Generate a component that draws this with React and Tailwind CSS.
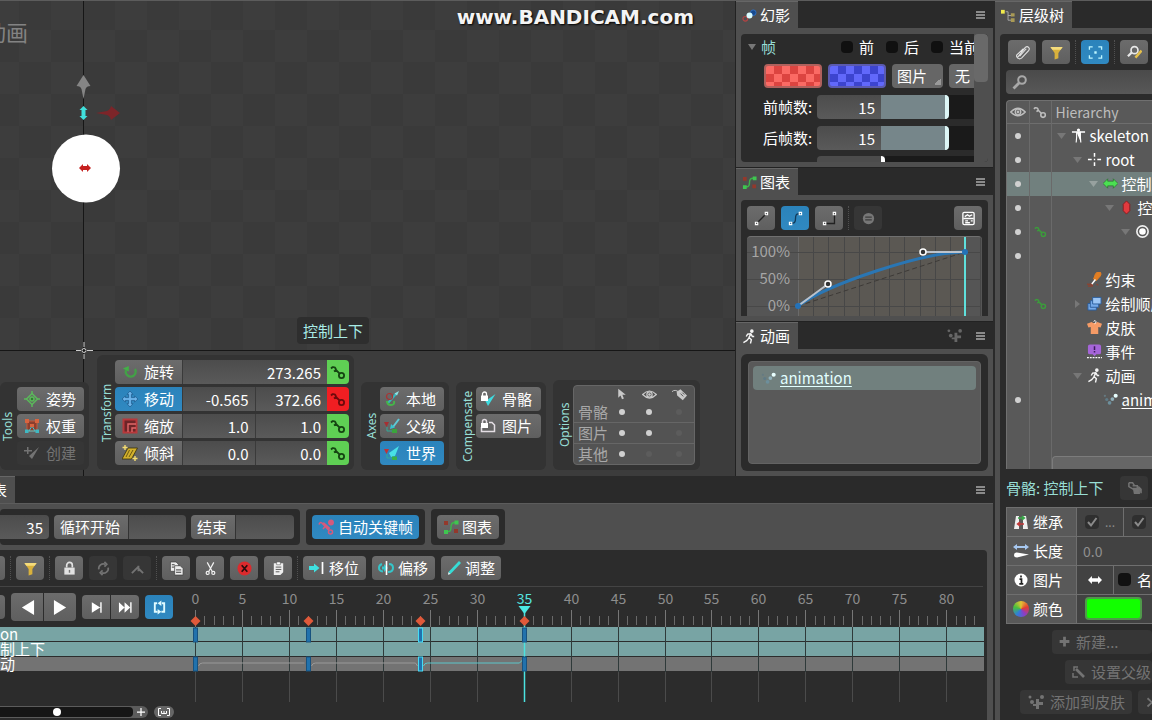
import { useState } from "react";

const BTN =
  "flex items-center rounded bg-gradient-to-b from-[#6c6c6c] to-[#5f5f5f] text-white whitespace-nowrap";
const BTN_ON =
  "flex items-center rounded bg-gradient-to-b from-[#2b83bb] to-[#3089c1] text-white whitespace-nowrap";
const BTN_OFF =
  "flex items-center rounded bg-[#363636] text-[#737373] whitespace-nowrap";
const FIELD =
  "h-6 min-w-0 bg-gradient-to-b from-[#4c4c4c] to-[#5a5a5a] text-right text-white outline-none";

// every drawing sits on a 16 x 16 grid
const ICONS = {
  key: (
    <g fill="none" stroke="currentColor" strokeWidth="1.8">
      <circle cx="11.5" cy="11.5" r="2.6" />
      <path d="M9.700 9.700 6 6Q5.500 2.500 2.500 3.200L1 4.500M6 6 4 7.500" />
    </g>
  ),
  rotate: (
    <g fill="none" stroke="#43a047" strokeWidth="2.4">
      <path d="M4 6a5 5 0 1 0 9-1" />
      <path d="M.8 4.5 6.8 2v5.6z" fill="#43b047" stroke="none" />
    </g>
  ),
  move: (
    <path
      d="M8 0l3 3.4H9.4v3.2h3.2V5L16 8l-3.4 3V9.4H9.4v3.2H11L8 16l-3-3.4h1.6V9.4H3.4V11L0 8l3.4-3v1.6h3.2V3.4H5z"
      fill="#6db4ea"
      stroke="#1a5688"
      strokeWidth=".7"
    />
  ),
  scale: (
    <g fill="none" stroke="#b8383b" strokeWidth="2">
      <path d="M1.5 1.5h13v13h-13z" fill="#6c2527" />
      <path d="M6 14V6h8M10 14v-4h4" stroke="#e0686a" strokeWidth="1.4" />
    </g>
  ),
  shear: (
    <g>
      <path d="M6 3h9.500l-6 11H0z" fill="#d2b02d" stroke="#3a3208" strokeWidth=".8" />
      <path d="M7.500 5 4 12M11 5l-4 7" stroke="#6b5912" />
      <path d="M3 0v5M.5 2.500h5M13 11v5M10.500 13.500h5" stroke="#f6dd70" strokeWidth="1.400" />
    </g>
  ),
  pose: (
    <g fill="none" stroke="#5bb85b" strokeWidth="1.500">
      <path d="M8 2.500 13.500 8 8 13.500 2.500 8z" />
      <path d="M8 0v3M8 13v3M0 8h3M13 8h3" />
      <circle cx="8" cy="8" r="2" fill="#2d7f2d" />
    </g>
  ),
  weights: (
    <g>
      <path d="M3 3h10v10H3z" fill="#8b3f2e" stroke="#c65a3c" />
      <path d="M3 13h10M5 13 8 8l3 5" stroke="#43c8d0" fill="none" />
      <path d="M1 1h4v4H1zM11 1h4v4h-4zM6 6h4v3H6z" fill="#d8643f" />
      <path d="M1 11.500h3.500V15H1zM11.500 11.500H15V15h-3.500z" fill="#3fb9c4" />
    </g>
  ),
  create: (
    <g fill="currentColor">
      <path d="M15 2 8 14 5 11z" />
      <path d="M3 2h1.500v3H8v1.500H4.500V9H3V6.500H0V5h3z" />
    </g>
  ),
  axisLocal: (
    <g fill="none">
      <path d="m4 12 8-9" stroke="#37b7bd" strokeWidth="2" />
      <circle cx="5.500" cy="5.500" r="3" stroke="#a33" strokeWidth="1.200" />
      <path d="M3 10q0 4 4 4t3-4" stroke="#46b54a" strokeWidth="2" />
      <path d="m15 0-2 4.500-2.500-2z" fill="#8ce4e6" />
    </g>
  ),
  axisParent: (
    <g>
      <path d="M15 1 9 9" stroke="#5fc9d6" strokeWidth="2" />
      <path d="m6 11 1-5 4 3.500z" fill="#39c3cf" />
      <path d="M0 4h5L2.500 9z" fill="#a62f32" />
      <path d="M3 9v4h8" stroke="#3a9" fill="none" />
      <path d="M8 11h5v4H8z" fill="#3ba43c" />
    </g>
  ),
  axisWorld: (
    <g>
      <path d="M15 1 5 8l2 4 4-1z" fill="#48e0e6" />
      <path d="M0 4h5L2.500 9z" fill="#c23236" />
      <path d="M3 9v4h6" stroke="#3a9" fill="none" />
      <path d="M8 11.500h5V15H8z" fill="#39b04a" />
    </g>
  ),
  compBone: (
    <g>
      <path d="M15.500 3 8 15 5.500 10z" fill="#3fdbe0" />
      <path d="M1 4.500h7V10H1z" fill="#fff" />
      <path d="M2.500 5V3a2 2 0 0 1 4 0v2" fill="none" stroke="#fff" strokeWidth="1.300" />
    </g>
  ),
  compImage: (
    <g fill="none" stroke="#e4dee4" strokeWidth="1.500">
      <path d="M1.500 9v4.500h13V7l-2.500-2.500H9" />
      <path d="M1 5h7v5H1z" fill="#fff" stroke="none" />
      <path d="M2.500 5V3.500a2 2 0 0 1 4 0V5" />
    </g>
  ),
  cursor: <path d="M3 1v12l3-3 2 5 2.500-1-2-5H13z" fill="currentColor" />,
  eye: (
    <g fill="none" stroke="currentColor" strokeWidth="1.300">
      <path d="M.7 8Q8 .5 15.300 8 8 15.500.7 8z" />
      <circle cx="8" cy="8" r="2.800" />
      <circle cx="8" cy="8" r=".8" fill="currentColor" />
    </g>
  ),
  tag: (
    <g>
      <path d="M5 5 9 2.500 16 9l-4.500 5L5.500 9z" fill="currentColor" />
      <path d="M0 5Q3 2 7.500 5.500" stroke="currentColor" fill="none" />
      <path d="m9 7 3 3M11 6l2 2" stroke="#4f4f4f" />
    </g>
  ),
  ghost: (
    <g>
      <circle cx="3.500" cy="11.500" r="2.500" fill="none" stroke="#b54343" strokeWidth="1.200" />
      <circle cx="12" cy="5" r="3" fill="#174a8e" stroke="#2d6ec2" />
      <circle cx="8" cy="8" r="3.200" fill="#d9fbff" />
    </g>
  ),
  graph: (
    <g>
      <path d="M1 2h4v4H1zM11 10h4v4h-4z" fill="#93392c" />
      <path d="M3 12.500h3Q8 12 8 8t3-4.500h3" fill="none" stroke="#3cb54a" strokeWidth="1.500" />
      <path d="M1 11h4v4H1zM11.500 1.500h4v4h-4z" fill="#3fc650" />
    </g>
  ),
  runner: (
    <g fill="none" stroke="#f4f4f4" strokeWidth="1.500">
      <circle cx="10.500" cy="2.300" r="1.200" fill="#fff" />
      <path d="M9.500 5 7.500 9l2.500 2.500-1 4M7.500 9.500 5 12.500l-3.500 2M9.500 5 6 5.500 4.500 8M9.500 5l1.500 3h2" />
    </g>
  ),
  dots: (
    <g>
      <circle cx="2" cy="4" r="1.200" fill="#667a82" />
      <circle cx="4" cy="8" r="1.700" fill="#5f7a86" />
      <circle cx="7" cy="11.500" r="2" fill="#6d8f9c" />
      <circle cx="10" cy="7.500" r="2" fill="#8fb0ba" />
      <circle cx="13.500" cy="4" r="2.200" fill="#e8ffff" />
    </g>
  ),
  dotsAdd: (
    <g fill="currentColor">
      <circle cx="2" cy="3" r="1.500" />
      <circle cx="4" cy="8" r="2" />
      <circle cx="14" cy="3" r="2" />
      <path d="M8 5h3v3h4v3h-4v4H8v-3H5v-2h3z" />
    </g>
  ),
  linear: (
    <g stroke="#222" fill="none" strokeWidth="1.400">
      <path d="M3 13 13 3" />
      <path d="M1.500 12h2.500v2.500H1.500zM12 1.500h2.500V4H12z" stroke="#fff" strokeWidth="1.200" />
    </g>
  ),
  bezier: (
    <g stroke="#113a5a" fill="none" strokeWidth="1.400">
      <path d="M3 13h2Q8 13 8 8t3-5h2" />
      <path d="M1.500 12h2.500v2.500H1.500zM12 1.500h2.500V4H12z" stroke="#fff" strokeWidth="1.200" />
    </g>
  ),
  stepped: (
    <g stroke="#222" fill="none" strokeWidth="1.400">
      <path d="M3 13.300h10.300V3" />
      <path d="M1.500 12h2.500v2.500H1.500zM12 1.500h2.500V4H12z" stroke="#fff" strokeWidth="1.200" />
    </g>
  ),
  equal: (
    <g>
      <circle cx="8" cy="8" r="6" fill="#777" />
      <path d="M4.500 6.500h7M4.500 9.500h7" stroke="#3c3c3c" strokeWidth="1.500" />
    </g>
  ),
  sheet: (
    <g fill="none" stroke="#fff" strokeWidth="1.400">
      <rect x="2" y="1.500" width="12" height="13" rx="1.500" />
      <path d="m4 6 3-2 2 1.500L12 4M2.500 8h11M4.500 10.500h3M4.500 12.500h5M10.500 10.500h2" />
    </g>
  ),
  tree: (
    <g>
      <path d="M5 4h2.500v9H11M7.500 8H11" stroke="#aaa" fill="none" />
      <path d="M0 2h4v4H0z" fill="#f1ea4c" />
      <path d="M10.500 5.500h4v3.500h-4zM10.500 11h4v4h-4z" fill="#a99a55" />
    </g>
  ),
  clip: (
    <path
      d="m3 13 8-10.500q2-1.500 3.500 0t0 3.500L7 14q-2 1.500-4 0t-1-3.500L9 4M5 12l7-8"
      stroke="#e2e2e2"
      fill="none"
      strokeWidth="1.200"
    />
  ),
  filter: (
    <g>
      <path d="M1.500 2h13L10 8.500V14l-4 1.500v-7z" fill="#d9b13c" />
      <path d="M1.500 2h13L12.500 5h-9z" fill="#f5dc7c" />
    </g>
  ),
  focus: (
    <g fill="none" stroke="#bff6ff" strokeWidth="1.400">
      <path d="M1.500 5V2H5M11 2h3.500v3M14.500 11v3H11M5 14H1.500v-3" />
      <path d="M7 7h2v2H7z" fill="#bff6ff" strokeWidth=".5" />
    </g>
  ),
  findEdit: (
    <g fill="none">
      <circle cx="8" cy="5.500" r="3.700" stroke="#e8e8e8" strokeWidth="1.800" />
      <path d="m5 8-4 4" stroke="#e8e8e8" strokeWidth="2.400" />
      <path d="M15.500 6 9 13.500" stroke="#e5c04a" strokeWidth="2.600" />
    </g>
  ),
  search: (
    <g fill="none" stroke="currentColor">
      <circle cx="10" cy="6" r="3.800" strokeWidth="2" />
      <path d="m7 9-5.500 5.500" strokeWidth="2.800" />
    </g>
  ),
  skeleton: (
    <g stroke="#fff" fill="#fff">
      <circle cx="8" cy="2.200" r="1.700" stroke="none" />
      <path d="M1 4.200h14" fill="none" strokeWidth="1.500" />
      <path d="M6 4.500h4V10l.5 5.500M6 4.500V10l-.5 5.500" strokeWidth="1.200" />
    </g>
  ),
  root: (
    <g stroke="#fff" strokeWidth="1.600" fill="none">
      <path d="M8 1v4M8 11v4M1 8h4M11 8h4" />
      <path d="M7.300 8h1.400" />
    </g>
  ),
  boneH: (
    <path d="m0 8 5-5v2.500h6V3l5 5-5 5v-2.500H5V13z" fill="#4be052" stroke="#215f24" strokeWidth=".6" />
  ),
  boneV: <path d="M8 1l3.500 3.500v7L8 15l-3.500-3.500v-7z" fill="#e23a3e" stroke="#8b1d20" />,
  target: (
    <g>
      <circle cx="8" cy="8" r="6" fill="none" stroke="#eee" strokeWidth="1.800" />
      <circle cx="8" cy="8" r="3.500" fill="#fff" />
    </g>
  ),
  constraint: (
    <g>
      <path d="M11 0h3q2 2 0 4.500L10 9 7 7.500 9 2z" fill="#e27e22" stroke="#e27e22" />
      <path d="m9 8-4 5" stroke="#fff" strokeWidth="1.600" />
      <path d="M0 13h5l1 2H1M10 13l2 1" stroke="#a33a20" fill="none" />
    </g>
  ),
  order: (
    <g fill="#75a9e8" stroke="#2b5d9c">
      <path d="M1 8h9v7H1z" />
      <path d="M3.500 5h9v7h-9z" />
      <path d="M6 1.500h9v7H6z" fill="#9ac4f4" />
    </g>
  ),
  skin: (
    <g>
      <path d="M0 4 5 2q3 2.500 6 0l5 2-1.500 4-2.500-.5V15H4V7.500L1.500 8z" fill="#f59b66" />
      <path d="M7 1.500q2-2 2.500 0T8 4" stroke="#fff" fill="none" />
    </g>
  ),
  event: (
    <g>
      <path d="M3 .5h10q2 0 2 2V9q0 2-2 2h-3l-2 2-2-2H3q-2 0-2-2V2.500q0-2 2-2z" fill="#a565d8" />
      <path d="M8 2.500v4M8 7.500V9" stroke="#3c1a5c" strokeWidth="1.600" />
      <path d="M0 14.500h16" stroke="#fff" strokeWidth="1.500" strokeDasharray="2 1" />
    </g>
  ),
  inherit: (
    <g>
      <path d="M3 2h3v13H1zM10 2h3l2 13h-5z" fill="#eee" />
      <path d="M5 4h6M9 2l2.500 2L9 6" stroke="#38a848" fill="none" strokeWidth="1.400" />
      <path d="M11 10H5M7 8l-2.500 2L7 12" stroke="#c23838" fill="none" strokeWidth="1.400" />
    </g>
  ),
  length: (
    <g>
      <path d="m0 4 4-3v2h8V1l4 3-4 3V5H4v2z" fill="#a7c8f0" />
      <path d="M1 12q0-3 3-2.500l12 2-12 3Q1 14.500 1 12z" fill="#fff" />
    </g>
  ),
  info: (
    <g>
      <circle cx="8" cy="8" r="6.500" fill="#fff" />
      <path d="M8 3.500v2M6.500 7.200H8.500v4.300M6.300 11.800h4" stroke="#222" strokeWidth="1.700" fill="none" />
    </g>
  ),
  arrows: <path d="m0 8 4.500-4.500v2.500h7V3.500L16 8l-4.500 4.500V10h-7v2.500z" fill="#fff" />,
  plus: <path d="M6.300 2h3.400v4.300H14v3.400H9.700V14H6.300V9.700H2V6.300h4.300z" fill="currentColor" />,
  thinPlus: <path d="M8 0v16M0 8h16" stroke="currentColor" strokeWidth="2.500" />,
  parent: (
    <g fill="none" stroke="currentColor" strokeWidth="1.500">
      <path d="M5 5 13 13" strokeWidth="2.600" />
      <path d="M3 7V3h4M2 9v4h5" />
    </g>
  ),
  copyBones: (
    <g fill="none" stroke="currentColor" strokeWidth="1.600">
      <path d="M2 3h4l2 3M2 3v4l5 3M6 6h5v4" />
      <path d="M7 9h6v5H8zM12 7l3 3v4" fill="currentColor" />
    </g>
  ),
  cross: <path d="m2 3 12 11M14 3 2 14" stroke="currentColor" strokeWidth="2.400" />,
  autoKey: (
    <g fill="none" stroke="#d65a7d" strokeWidth="1.500">
      <circle cx="13" cy="3.500" r="2.200" fill="#d65a7d" />
      <circle cx="12.500" cy="13" r="2" />
      <path d="M11 11.500 4 4Q2 2.500 1 5.500M7 7.500 5 10" />
      <path d="m5 4 6.500 6" strokeWidth="2.400" />
    </g>
  ),
  lock: (
    <g>
      <path d="M2.500 7h11v7.500h-11z" fill="#e2e2e2" />
      <path d="M5 7V4.500a3 3 0 0 1 6 0V7" fill="none" stroke="#e2e2e2" strokeWidth="1.800" />
      <path d="M8 9.500v3" stroke="#777" strokeWidth="1.500" />
    </g>
  ),
  refresh: (
    <g fill="none" stroke="currentColor" strokeWidth="1.800">
      <path d="M3 9a5 5 0 0 1 7-5.500M13 7a5 5 0 0 1-7 5.500" />
      <path d="M9 1l2.500 2.500L9 6M7 10l-2.500 2.500L7 15" />
    </g>
  ),
  slope: (
    <path d="M2 13 9 6M9 8l5 5M9 11V5" fill="none" stroke="currentColor" strokeWidth="2" />
  ),
  copy: (
    <g fill="#eee" stroke="#444" strokeWidth=".8">
      <path d="M1.500 1h6l2.500 2.500V11H1.500z" />
      <path d="M6 5h6l3 3v7H6z" />
      <path d="M3 4h3M3 6.500h2.500M7.500 9.500h5.500M7.500 12h5.500" stroke="#333" strokeWidth="1" />
    </g>
  ),
  cut: (
    <g fill="none" stroke="#f2f2f2" strokeWidth="1.300">
      <path d="m4.500 1.500 5.500 10M11.500 1.500 6 11.500" />
      <circle cx="5" cy="12.700" r="1.600" />
      <circle cx="11" cy="12.700" r="1.600" />
    </g>
  ),
  remove: (
    <g>
      <circle cx="8" cy="8" r="7.500" fill="#dc2a2d" />
      <path d="m5 4.500 6 7M11 4.500l-6 7" stroke="#2a0d0d" strokeWidth="1.800" />
    </g>
  ),
  paste: (
    <g>
      <path d="M3 2.500h10V12l-3 3H3z" fill="#eee" />
      <path d="M6 1h4v3H6z" fill="#fff" stroke="#555" strokeWidth=".6" />
      <path d="M5 6.500h6M5 9h6M5 11.500h4" stroke="#555" />
    </g>
  ),
  shift: (
    <g>
      <path d="M0 6h5V3.500L10.500 8 5 12.500V10H0z" fill="#3fe0e0" />
      <path d="M13.500 2v12" stroke="#fff" strokeWidth="1.700" />
    </g>
  ),
  offset: (
    <g fill="none" stroke="#35c5c9" strokeWidth="2">
      <path d="M4 4Q1 5 1 8t4 3.500M10 12q5 0 5-4t-4-4" />
      <path d="M4 6.500h2V4l4 4-4 4V9.500H4z" fill="#35c5c9" stroke="none" />
      <path d="M8.500 1v14" stroke="#fff" strokeWidth="1.600" />
    </g>
  ),
  adjust: (
    <g>
      <path d="M14 2 3.500 13" stroke="#36dcd6" strokeWidth="2.800" />
      <path d="m2.500 12 2 2-2.500.8z" fill="#e6ffff" />
    </g>
  ),
  prev: <path d="M15 0v16L2 8z" fill="#fff" />,
  play: <path d="M1 0v16l13-8z" fill="#fff" />,
  next: <path d="M3 2.500v11L12 8zM12 2.500h1.500v11H12z" fill="#fff" />,
  last: <path d="M1 2.500v11L7 8zM7 2.500v11L13 8zM13 2.500h1.500v11H13z" fill="#fff" />,
  loop: (
    <g fill="none" stroke="#e0fbff" strokeWidth="2">
      <path d="M5.500 3.500H3v9h3M10.500 3.500H13v9h-3" />
      <path d="M6 9.500v6l4-3zM10 .5v6l-4-3z" fill="#e0fbff" stroke="none" />
    </g>
  ),
};

const Icon = ({ name, size = 16, className = "" }) => (
  <svg viewBox="0 0 16 16" width={size} height={size} className={`shrink-0 ${className}`} aria-hidden="true">
    {ICONS[name]}
  </svg>
);

const MenuButton = () => (
  <button aria-label="菜单" className="flex w-[9px] flex-col gap-px">
    <span className="h-[2px] bg-[#8a8a8a]" />
    <span className="h-[2px] bg-[#8a8a8a]" />
    <span className="h-[2px] bg-[#8a8a8a]" />
  </button>
);

const PanelHeader = ({ icon, title, children, tabClass = "pl-1.5 pr-2" }) => (
  <div className="flex h-[27px] shrink-0 items-center bg-[#2a2a2a] pr-2">
    <h2 className={`flex h-full items-center gap-[3px] border-t border-[#666] bg-[#4f4f4f] text-white ${tabClass}`}>
      {icon && <Icon name={icon} size={15} />}
      {title}
    </h2>
    <div className="ml-auto flex items-center gap-3.5">{children}</div>
  </div>
);

const IconButton = ({ name, label, state }) => (
  <button
    aria-label={label}
    className={`${state === "on" ? BTN_ON : state === "off" ? BTN_OFF : BTN} h-6 w-7 shrink-0 justify-center`}
  >
    <Icon name={name} size={15} />
  </button>
);

const Separator = () => (
  <span className="-mx-px h-6 shrink-0 border-l border-dotted border-[#505050]" />
);

const ToolGroup = ({ label, className = "pl-0.5", children }) => (
  <section className={`flex min-h-[88px] rounded-md bg-[#333] py-[5px] pr-[5px] ${className}`}>
    <h3 className="flex w-4 rotate-180 items-center justify-center font-['Noto_Sans',sans-serif] text-xs leading-4 text-[#98ded5] [writing-mode:vertical-rl]">
      {label}
    </h3>
    {children}
  </section>
);

const TRANSFORMS = [
  { icon: "rotate", name: "旋转", values: ["273.265"] },
  { icon: "move", name: "移动", values: ["-0.565", "372.66"], active: true },
  { icon: "scale", name: "缩放", values: ["1.0", "1.0"] },
  { icon: "shear", name: "倾斜", values: ["0.0", "0.0"] },
];

const OPTIONS = [
  { name: "骨骼", on: [true, true, false] },
  { name: "图片", on: [true, true, false] },
  { name: "其他", on: [true, false, false] },
];

const Toolbox = () => {
  const [axis, setAxis] = useState("世界");

  return (
    <div className="relative flex items-end gap-[7px] pb-1.5">
      <ToolGroup label="Tools" className="mr-px pl-0">
        <div className="ml-px flex flex-col gap-[3px]">
          <button className={`${BTN} h-6 w-[67px] gap-1.5 px-[7px]`}>
            <Icon name="pose" />姿势
          </button>
          <button className={`${BTN} h-6 w-[67px] gap-1.5 px-[7px]`}>
            <Icon name="weights" />权重
          </button>
          <button disabled className={`${BTN_OFF} h-6 w-[67px] gap-1.5 px-[7px]`}>
            <Icon name="create" />创建
          </button>
        </div>
      </ToolGroup>

      <ToolGroup label="Transform">
        <div className="flex flex-col gap-[3px]">
          {TRANSFORMS.map((t) => (
            <div key={t.name} className="flex h-6 overflow-hidden rounded">
              <button className={`${t.active ? BTN_ON : BTN} w-[67px] gap-1.5 rounded-none px-[7px]`}>
                <Icon name={t.icon} />
                {t.name}
              </button>
              <div className="flex w-[145px]">
                {t.values.map((v, i) => (
                  <input
                    key={i}
                    aria-label={`${t.name} ${i + 1}`}
                    defaultValue={v}
                    className={`${FIELD} w-0 flex-1 border-l border-[#3a3a3a] pr-1.5`}
                  />
                ))}
              </div>
              <button
                aria-label={`${t.name} key`}
                className={`flex w-[22px] items-center justify-center ${
                  t.active ? "bg-[#f01e22] text-[#6d0a0c]" : "bg-[#5fcf54] text-[#154412]"
                }`}
              >
                <Icon name="key" />
              </button>
            </div>
          ))}
        </div>
      </ToolGroup>

      <ToolGroup label="Axes" className="pl-[3px]">
        <div className="flex flex-col gap-[3px]">
          {[
            ["axisLocal", "本地"],
            ["axisParent", "父级"],
            ["axisWorld", "世界"],
          ].map(([icon, name]) => (
            <button
              key={name}
              onClick={() => setAxis(name)}
              className={`${axis === name ? BTN_ON : BTN} h-6 w-16 gap-1.5 pl-1`}
            >
              <Icon name={icon} />
              {name}
            </button>
          ))}
        </div>
      </ToolGroup>

      <ToolGroup label="Compensate" className="pl-1">
        <div className="flex flex-col gap-[3px]">
          <button className={`${BTN} h-6 w-[65px] gap-1.5 pl-1`}>
            <Icon name="compBone" />骨骼
          </button>
          <button className={`${BTN} h-6 w-[65px] gap-1.5 pl-1`}>
            <Icon name="compImage" />图片
          </button>
        </div>
      </ToolGroup>

      <ToolGroup label="Options" className="pl-1">
        <table className="w-[122px] border-separate border-spacing-0 rounded border border-[#666] bg-[#535353] text-[#a8a8a8]">
          <thead>
            <tr className="h-4 text-[#c9c9c9]">
              <td className="w-9 p-0" />
              <th className="p-0" aria-label="选择"><Icon name="cursor" size={12} className="mx-auto" /></th>
              <th className="p-0" aria-label="可见"><Icon name="eye" size={15} className="mx-auto" /></th>
              <th className="p-0" aria-label="名称"><Icon name="tag" size={15} className="mx-auto" /></th>
            </tr>
          </thead>
          <tbody>
            {OPTIONS.map((o, r) => (
              <tr key={o.name} className="h-5">
                <th className={`p-0 pl-1 text-left font-normal leading-5 ${r < 2 ? "border-b border-[#666]" : ""}`}>
                  {o.name}
                </th>
                {o.on.map((on, i) => (
                  <td key={i} className={`p-0 ${r < 2 ? "border-b border-[#666]" : ""}`}>
                    <input
                      type="checkbox"
                      aria-label={`${o.name} ${i + 1}`}
                      defaultChecked={on}
                      className="mx-auto block size-1.5 appearance-none rounded-full bg-[#5c5c5c] checked:bg-[#d0d0d0]"
                    />
                  </td>
                ))}
              </tr>
            ))}
          </tbody>
        </table>
      </ToolGroup>
    </div>
  );
};

const Viewport = () => (
  <main className="relative flex min-w-0 flex-1 flex-col justify-end overflow-hidden bg-[#3c3c3c]">
    <div className="absolute inset-x-0 top-0 h-[349px] bg-[conic-gradient(#3a3a3a_25%,#3d3d3d_0_50%,#3a3a3a_0_75%,#3d3d3d_0)] bg-[length:64px_64px] bg-[position:19px_29px]" />
    <svg className="absolute inset-0 size-full">
      <path d="M83.500 0V476M0 349.500H2000" stroke="#161616" />
      <path d="m83.500 74 7 11q-4 0-5 3l-2 10-2-10q-1-3-5-3z" fill="#858585" />
      <path d="m120 112-9 7q-1-4-4-5l-11-2 11-2q3-1 4-5z" fill="#7c2529" />
      <path d="m83.500 105 4 4h-2v6h2l-4 4-4-4h2v-6h-2z" fill="#40e0dc" />
      <circle cx="86" cy="167.500" r="34" fill="#fff" />
      <path d="m79 167 4-4v2h4v-2l4 4-4 4v-2h-4v2z" fill="#c5201f" />
      <path d="M84 341v5M84 353v5M76 349.500h5M87 349.500h6" stroke="#ccc" />
      <circle cx="84" cy="349.500" r="2" fill="none" stroke="#ccc" />
    </svg>
    <p className="absolute -left-4 top-4 text-[22px] leading-7 text-[#838383]">动画</p>
    <p className="absolute right-[41px] top-1 font-['DejaVu_Sans',sans-serif] text-xl font-bold leading-6 text-[#f4f4f4] [text-shadow:1px_1px_2px_#000]">
      www.BANDICAM.com
    </p>
    <p className="absolute left-[297px] top-[316px] rounded bg-[#2e2e2e] px-1.5 leading-[27px] text-[#a9ece6]">控制上下</p>
    <Toolbox />
  </main>
);

const FrameSlider = ({ label }) => (
  <div className="ml-[22px] flex h-6 items-center">
    <label className="w-[54px] shrink-0 whitespace-nowrap text-white">{label}:</label>
    <input aria-label={`${label} 值`} defaultValue="15" className={`${FIELD} w-16 shrink-0 rounded-l pr-1.5`} />
    <input
      type="range"
      aria-label={label}
      min="0"
      max="30"
      defaultValue="15"
      className="h-6 w-[132px] shrink-0 appearance-none bg-[linear-gradient(90deg,#76868a_50%,#1a1a1a_50%)] bg-[#76868a] [&::-webkit-slider-thumb]:h-6 [&::-webkit-slider-thumb]:w-1 [&::-webkit-slider-thumb]:appearance-none [&::-webkit-slider-thumb]:rounded-r [&::-webkit-slider-thumb]:bg-[#dcf6f6]"
    />
  </div>
);

const GhostPanel = () => (
  <section className="flex min-h-0 flex-col bg-[#4f4f4f]">
    <PanelHeader icon="ghost" title="幻影">
      <MenuButton />
    </PanelHeader>
    <div className="flex min-h-0 flex-1 px-[5px] pb-[5px] pt-1.5">
      <div className="flex min-w-0 flex-1 overflow-hidden rounded bg-[#2b2b2b]">
        <div className="flex min-w-0 flex-1 flex-col overflow-hidden">
          <div className="flex h-[30px] shrink-0 items-center whitespace-nowrap pb-1 pl-1.5 text-white">
            <svg width="10" height="6" className="shrink-0"><path d="M1 0h8L5 6z" fill="#777" /></svg>
            <h3 className="ml-1 w-20 shrink-0 text-[#98ded5]">帧</h3>
            {["前", "后", "当前"].map((name) => (
              <label key={name} className="mr-3 flex shrink-0 items-center gap-1.5">
                <input type="checkbox" className="size-3 appearance-none rounded bg-[#101010] checked:bg-[#2b83bb]" />
                {name}
              </label>
            ))}
          </div>
          <div className="ml-[23px] flex h-6 shrink-0 gap-1.5">
            <button
              aria-label="前帧颜色"
              className="w-[58px] shrink-0 rounded border-2 border-[#b0605c] bg-[conic-gradient(#dc4440_25%,#fb6a64_0_50%,#dc4440_0_75%,#fb6a64_0)] bg-[length:16px_16px]"
            />
            <button
              aria-label="后帧颜色"
              className="w-[58px] shrink-0 rounded border-2 border-[#5a5ab0] bg-[conic-gradient(#3c44cf_25%,#6168fb_0_50%,#3c44cf_0_75%,#6168fb_0)] bg-[length:16px_16px]"
            />
            <select
              aria-label="类型"
              className="w-[51px] shrink-0 appearance-none rounded bg-[#666] bg-[linear-gradient(135deg,transparent_50%,#999_50%)] bg-[length:7px_7px] bg-[position:42px_14px] bg-no-repeat pl-[5px] text-white"
            >
              <option>图片</option>
            </select>
            <select aria-label="模式" className="w-[51px] shrink-0 appearance-none rounded bg-[#666] pl-1.5 text-white">
              <option>无</option>
            </select>
          </div>
          <div className="mt-[7px] flex flex-col gap-[7px]">
            <FrameSlider label="前帧数" />
            <FrameSlider label="后帧数" />
          </div>
          <div className="ml-[76px] mt-1.5 flex h-6 shrink-0">
            <span className="w-16 rounded-tl bg-[#4c4c4c]" />
            <span className="h-6 w-1 rounded-tr bg-white" />
            <span className="flex-1 bg-[#1a1a1a]" />
          </div>
        </div>
        <div className="w-3.5 bg-[#4f4f4f]">
          <div className="h-12 rounded bg-[#696969]" />
        </div>
      </div>
    </div>
  </section>
);

const CurvePanel = () => (
  <section className="flex min-h-0 flex-col border-t border-[#222] bg-[#4f4f4f]">
    <PanelHeader icon="graph" title="图表">
      <MenuButton />
    </PanelHeader>
    <div className="min-h-0 flex-1 px-[5px] pb-[5px] pt-[5px]">
      <div className="flex h-full flex-col overflow-hidden rounded-t bg-[#2b2b2b] px-1.5 pt-1.5">
        <div className="flex h-6 items-center gap-1.5">
          <IconButton name="linear" label="线性" />
          <IconButton name="bezier" label="贝塞尔" state="on" />
          <IconButton name="stepped" label="阶梯" />
          <Separator />
          <IconButton name="equal" label="相等" state="off" />
          <span className="flex-1" />
          <IconButton name="sheet" label="预设" />
        </div>
        <svg className="mt-1.5 w-full flex-1 rounded-t border-t border-[#707070] bg-[#555]" height="79" fontSize="15" fill="#a6a6a6">
          <rect x="51" y="0" width="167" height="79" fill="#5b5853" />
          {[...Array(13).keys()].map((i) => (
            <path key={i} d={`M${Math.round(51 + i * 15.200)}.500 0v79`} stroke={i ? "#474747" : "#6a6a6a"} />
          ))}
          <path d="M0 15.500h234M0 42.500h234M0 69.500h234" stroke="#484848" />
          <text x="43" y="20" textAnchor="end">100%</text>
          <text x="43" y="47" textAnchor="end">50%</text>
          <text x="43" y="74" textAnchor="end">0%</text>
          <path d="M51 69 218 15" stroke="#3d3a37" strokeDasharray="5 3" />
          <path d="M51 69C81 47 176 15 218 15" stroke="#2a76b4" strokeWidth="3" fill="none" />
          <path d="M51 69 81 47M176 15h42" stroke="#bcc3cc" strokeWidth="2" />
          <path d="M218 0v79" stroke="#5fe0dc" strokeWidth="2" />
          <circle cx="51" cy="69" r="3" fill="#2472b8" />
          <circle cx="218" cy="15" r="3" fill="#2472b8" />
          <circle cx="81" cy="47" r="3" fill="#333" stroke="#fff" strokeWidth="1.500" />
          <circle cx="176" cy="15" r="3" fill="#333" stroke="#fff" strokeWidth="1.500" />
        </svg>
      </div>
    </div>
  </section>
);

const AnimationPanel = () => (
  <section className="flex min-h-0 flex-col border-t border-[#222] bg-[#4f4f4f]">
    <PanelHeader icon="runner" title="动画">
      <button aria-label="新建动画" className="text-[#666]">
        <Icon name="dotsAdd" size={15} />
      </button>
      <MenuButton />
    </PanelHeader>
    <div className="min-h-0 flex-1 px-[5px] py-[5px]">
      <div className="flex h-full rounded-md bg-[#2b2b2b] p-[7px]">
        <ul className="flex-1 rounded border border-[#636363] bg-[#595959] p-1">
          <li className="flex h-6 items-center gap-1 rounded bg-[#71807e] px-2 text-[#e2ffff]">
            <Icon name="dots" size={15} />
            <a href="#animation" className="underline underline-offset-2">animation</a>
          </li>
        </ul>
      </div>
    </div>
  </section>
);

const FRAME = 9.39;
const LAST_FRAME = 84;
const frameX = (f) => Math.round(15 + f * FRAME) + 0.5;

const Ruler = () => (
  <svg className="z-10 col-start-2 row-span-3 row-start-1 h-[116px] w-full" fontSize="14" textAnchor="middle">
    {[...Array(LAST_FRAME).keys()].map((f) =>
      f % 5 === 0 ? (
        <g key={f}>
          <text x={frameX(f)} y="17" fill={f === 35 ? "#55e6e0" : "#8d8d8d"}>{f}</text>
          <path d={`M${frameX(f)} 23v17`} stroke="#777" />
          <path d={`M${frameX(f)} 40v45`} stroke="#2f3a3a" />
          <path d={`M${frameX(f)} 85v30`} stroke="#4b4b4b" />
        </g>
      ) : (
        <path key={f} d={`M${frameX(f)} 29v9`} stroke="#6a6a6a" />
      )
    )}
    <path d={`M${frameX(0) + 3} 79q1-3 4-3H${frameX(12) - 4}M${frameX(12) + 3} 79q1-3 4-3H${frameX(24) - 5}l2 3`} fill="none" stroke="#9a9a9a" />
    <path d={`M${frameX(24) + 3} 79q1-3 4-3H${frameX(35) - 5}l3-3`} fill="none" stroke="#5cc7cb" />
    <path d={`M${frameX(35)} 23v92`} stroke="#4be3e0" strokeWidth="1.500" />
    {[0, 12, 24, 35].map((f) =>
      [41, 70].map((y) => (
        <rect
          key={`${f}-${y}`}
          x={frameX(f) - 2}
          y={y}
          width="4"
          height="14"
          fill="#2172ad"
          stroke={f === 24 ? "#45dcf5" : "#17527f"}
        />
      ))
    )}
    {[0, 12, 24, 35].map((f) => (
      <path key={f} d={`M${frameX(f)} 29l5 5-5 5-5-5z`} fill="#e0593a" />
    ))}
    <path d={`M${frameX(35) - 6} 19h12l-6 8z`} fill="#4be8e4" />
  </svg>
);

const Timeline = () => (
  <section className="mr-0.5 bg-[#4f4f4f]">
    <PanelHeader title="表" tabClass="-ml-2 pr-2">
      <MenuButton />
    </PanelHeader>
    <div className="flex gap-1.5 border-t border-[#5c5c5c] pb-[5px] pt-[5px]">
      <div className="flex gap-[5px] rounded bg-[#2b2b2b] py-1.5 pr-1.5">
        <input aria-label="当前帧" defaultValue="35" className={`${FIELD} w-[49px] rounded-r pr-1.5`} />
        <label className="flex overflow-hidden rounded">
          <span className={`${BTN} w-[74px] rounded-none px-1.5`}>循环开始</span>
          <input className={`${FIELD} w-[58px] border-l border-[#333]`} />
        </label>
        <label className="flex overflow-hidden rounded">
          <span className={`${BTN} w-11 rounded-none px-1.5`}>结束</span>
          <input className={`${FIELD} w-[59px] border-l border-[#333]`} />
        </label>
      </div>
      <div className="rounded bg-[#2b2b2b] p-1.5">
        <button className={`${BTN_ON} h-6 w-[107px] gap-1 px-1.5`}>
          <Icon name="autoKey" />自动关键帧
        </button>
      </div>
      <div className="rounded bg-[#2b2b2b] p-1.5">
        <button className={`${BTN} h-6 w-[62px] gap-[3px] px-1.5`}>
          <Icon name="graph" />图表
        </button>
      </div>
    </div>

    <div className="mr-1.5 rounded-tr bg-[#2c2c2c] pt-1.5">
      <div className="mr-1 flex items-center gap-1.5 border-b border-[#444] pb-1.5">
        <button aria-label="筛选" className={`${BTN} h-6 w-[5px] rounded-l-none`} />
        <Separator />
        <IconButton name="filter" label="过滤" />
        <Separator />
        <IconButton name="lock" label="锁定" />
        <IconButton name="refresh" label="刷新" state="off" />
        <IconButton name="slope" label="曲线" state="off" />
        <Separator />
        <IconButton name="copy" label="复制" />
        <IconButton name="cut" label="剪切" />
        <IconButton name="remove" label="删除" />
        <IconButton name="paste" label="粘贴" />
        <Separator />
        <button className={`${BTN} h-6 w-[63px] gap-1 px-1.5`}><Icon name="shift" />移位</button>
        <button className={`${BTN} h-6 w-[63px] gap-1 px-1.5`}><Icon name="offset" />偏移</button>
        <button className={`${BTN} h-6 w-[60px] gap-[3px] px-[5px]`}><Icon name="adjust" />调整</button>
      </div>

      <div className="mr-[3px] grid grid-cols-[180px_1fr] grid-rows-[40px_45px_31px]">
        <div className="flex items-center gap-1.5">
          <button aria-label="第一帧" className={`${BTN} h-6 w-[5px] rounded-l-none`} />
          <div className="flex gap-px overflow-hidden rounded">
            <button aria-label="倒放" className={`${BTN} h-7 w-8 justify-center rounded-none`}><Icon name="prev" size={15} /></button>
            <button aria-label="播放" className={`${BTN} h-7 w-8 justify-center rounded-none`}><Icon name="play" size={15} /></button>
          </div>
          <div className="flex gap-px overflow-hidden rounded">
            <button aria-label="下一帧" className={`${BTN} h-6 w-7 justify-center rounded-none`}><Icon name="next" size={15} /></button>
            <button aria-label="最后一帧" className={`${BTN} h-6 w-7 justify-center rounded-none`}><Icon name="last" size={15} /></button>
          </div>
          <IconButton name="loop" label="循环" state="on" />
        </div>
        <ul className="col-span-2 col-start-1 row-start-2 flex flex-col gap-px text-white">
          <li className="h-3.5 bg-[#78a4a4] leading-[14px]">on</li>
          <li className="h-3.5 bg-[#78a4a4] leading-[14px]">制上下</li>
          <li className="h-3.5 bg-[#737373] leading-[14px]">动</li>
        </ul>
        <Ruler />
      </div>

      <div className="flex h-[17px] items-center gap-1.5">
        <div className="flex h-3 items-center overflow-hidden rounded-r-md bg-[#5c5c5c]">
          <input
            type="range"
            aria-label="缩放时间轴"
            defaultValue="42"
            className="h-2.5 w-[133px] appearance-none rounded-r bg-[#161616] [&::-webkit-slider-thumb]:size-2 [&::-webkit-slider-thumb]:appearance-none [&::-webkit-slider-thumb]:rounded-full [&::-webkit-slider-thumb]:bg-white"
          />
          <button aria-label="放大" className="flex w-[15px] justify-center text-white">
            <Icon name="thinPlus" size={8} />
          </button>
        </div>
        <button aria-label="适应" className="flex h-3 w-5 items-center justify-center rounded-md bg-[#666]">
          <svg width="12" height="8" fill="none" stroke="#fff">
            <path d="M3 .5H.5v7H3M9 .5h2.500v7H9M3.500 3v2.500h5V3M6 3v2" />
          </svg>
        </button>
      </div>
    </div>
  </section>
);

const NODES = [
  { depth: 0, icon: "skeleton", name: "skeleton", open: true, eye: true },
  { depth: 1, icon: "root", name: "root", open: true, eye: true },
  { depth: 2, icon: "boneH", name: "控制上下", open: true, eye: true, selected: true },
  { depth: 3, icon: "boneV", name: "控制", open: true, eye: true },
  { depth: 4, icon: "target", name: "", open: true, eye: true, key: true },
  { depth: 5, eye: true },
  { depth: 1, icon: "constraint", name: "约束" },
  { depth: 1, icon: "order", name: "绘制顺序", closed: true, key: true },
  { depth: 1, icon: "skin", name: "皮肤" },
  { depth: 1, icon: "event", name: "事件" },
  { depth: 1, icon: "runner", name: "动画", open: true },
  { depth: 2, icon: "dots", name: "animation", link: true, eye: true },
];

const INDENT = ["pl-1", "pl-5", "pl-9", "pl-[52px]", "pl-[68px]", "pl-[84px]"];

const Hierarchy = () => (
  <div className="overflow-hidden rounded-tl border-l border-t border-[#707070] bg-[#595959]">
    <table className="w-full table-fixed border-collapse text-white">
      <thead>
        <tr className="h-[22px] border-b border-[#6e6e6e] text-[#bdbdbd]">
          <th className="w-[22px] border-r border-[#6a6a6a] p-0" aria-label="可见">
            <Icon name="eye" className="mx-auto" />
          </th>
          <th className="w-[22px] border-r border-[#6a6a6a] p-0" aria-label="关键帧">
            <Icon name="key" size={14} className="mx-auto" />
          </th>
          <th className="overflow-hidden p-0 pl-1 text-left text-[14px] font-normal leading-5">Hierarchy</th>
        </tr>
      </thead>
      <tbody>
        {NODES.map((n, i) => (
          <tr key={i} className={`h-6 ${n.selected ? "bg-[#71807e]" : ""}`}>
            <td className="border-r border-[#6a6a6a] p-0">
              {n.eye && (
                <input
                  type="checkbox"
                  aria-label={`${n.name || "slot"} 可见`}
                  defaultChecked
                  className="mx-auto block size-1.5 appearance-none rounded-full bg-[#666] checked:bg-[#d0d0d0]"
                />
              )}
            </td>
            <td className="border-r border-[#6a6a6a] p-0 text-[#3c9b3c]">
              {n.key && <Icon name="key" size={13} className="mx-auto" />}
            </td>
            <td className="overflow-hidden p-0">
              <div className={`flex h-6 items-center whitespace-nowrap ${INDENT[n.depth]}`}>
                <svg width="15" height="8" className="shrink-0">
                  {n.open && <path d="M1 1h9L5.500 7z" fill={n.selected ? "#97a19f" : "#777"} />}
                  {n.closed && <path d="M3 0v8l5-4z" fill="#777" />}
                </svg>
                {n.icon && <Icon name={n.icon} size={15} className="mr-1" />}
                {n.link ? <a href="#animation" className="underline underline-offset-2">{n.name}</a> : n.name}
              </div>
            </td>
          </tr>
        ))}
        <tr className="h-[57px]">
          <td className="border-r border-[#6a6a6a]" />
          <td className="border-r border-[#6a6a6a]" />
          <td className="p-0 align-bottom">
            <div className="h-[13px] rounded-tl border-l border-t border-[#7c7c7c] bg-[#666]" />
          </td>
        </tr>
      </tbody>
    </table>
  </div>
);

const PropLabel = ({ icon, children }) => (
  <th scope="row" className="w-[70px] border-r border-[#6f6f6f] bg-[#595959] p-0 font-normal">
    <div className="flex items-center gap-1 pl-1.5 text-white">
      <Icon name={icon} />
      {children}
    </div>
  </th>
);

const CHECK =
  "size-3.5 shrink-0 appearance-none rounded bg-[#2f2f2f] checked:bg-[linear-gradient(#2f2f2f,#2f2f2f)]";

const CheckMark = ({ label }) => (
  <span className="grid shrink-0">
    <input type="checkbox" defaultChecked aria-label={label} className={`${CHECK} col-start-1 row-start-1`} />
    <svg width="14" height="14" className="pointer-events-none col-start-1 row-start-1">
      <path d="m3 7 3 3.500L11.500 3" fill="none" stroke="#8a8a8a" strokeWidth="2" />
    </svg>
  </span>
);

const Properties = () => (
  <div>
    <div className="flex h-[38px] items-center justify-between pr-1">
      <h3 className="whitespace-nowrap text-[#98ded5]">骨骼: 控制上下</h3>
      <IconButton name="copyBones" label="复制骨骼" state="off" />
    </div>
    <table className="w-full table-fixed border-collapse border-l border-t border-[#6f6f6f] bg-[#424242]">
      <tbody>
        <tr className="h-[29px] border-b border-[#6f6f6f]">
          <PropLabel icon="inherit">继承</PropLabel>
          <td className="overflow-hidden p-0">
            <div className="flex h-7 items-center text-[#8a8a8a]">
              <label className="flex h-full w-[47px] shrink-0 items-center gap-1.5 border-r border-[#6f6f6f] pl-2">
                <CheckMark label="旋转继承" />
                <span className="text-xs">...</span>
              </label>
              <label className="flex shrink-0 items-center gap-2 pl-2">
                <CheckMark label="缩放继承" />
                <span className="text-xs">...</span>
              </label>
            </div>
          </td>
        </tr>
        <tr className="h-[29px] border-b border-[#6f6f6f]">
          <PropLabel icon="length">长度</PropLabel>
          <td className="p-0">
            <input aria-label="长度" defaultValue="0.0" className="w-full bg-transparent pl-1.5 text-[14px] text-[#8f8f8f] outline-none" />
          </td>
        </tr>
        <tr className="h-[29px] border-b border-[#6f6f6f]">
          <PropLabel icon="info">图片</PropLabel>
          <td className="overflow-hidden p-0">
            <div className="flex h-7 items-center whitespace-nowrap text-white">
              <button aria-label="图标" className="flex h-full w-[37px] shrink-0 items-center justify-center border-r border-[#6f6f6f]">
                <Icon name="arrows" size={14} />
              </button>
              <label className="flex items-center gap-1.5 pl-1">
                <input type="checkbox" className="size-[13px] shrink-0 appearance-none rounded bg-[#111] checked:bg-[#2b83bb]" />
                名称
              </label>
            </div>
          </td>
        </tr>
        <tr className="h-[29px] border-b border-[#6f6f6f]">
          <th scope="row" className="w-[70px] border-r border-[#6f6f6f] bg-[#595959] p-0 font-normal">
            <div className="flex items-center gap-1 pl-1.5 text-white">
              <span className="size-4 rounded-full bg-[conic-gradient(#e2c435,#e43d30,#8b3dc7,#2f7fd8,#49c13c,#e2c435)]" />
              颜色
            </div>
          </th>
          <td className="overflow-hidden p-0 pl-2">
            <button aria-label="颜色" className="block h-[23px] w-[57px] rounded border-2 border-[#4f9a4a] bg-[#12ff00]" />
          </td>
        </tr>
      </tbody>
    </table>
    <div className="flex flex-col gap-1.5 overflow-hidden pt-1.5">
      <button disabled className={`${BTN_OFF} ml-[46px] h-6 gap-[5px] pl-1.5`}>
        <Icon name="plus" size={13} />新建...
      </button>
      <button disabled className={`${BTN_OFF} ml-[59px] h-6 gap-1 pl-1.5`}>
        <Icon name="parent" />设置父级
      </button>
      <div className="ml-3.5 flex gap-1.5">
        <button disabled className={`${BTN_OFF} h-6 w-28 shrink-0 gap-1.5 px-2`}>
          <Icon name="dotsAdd" />添加到皮肤
        </button>
        <button disabled aria-label="断开" className={`${BTN_OFF} h-6 w-7 shrink-0 pl-2`}>
          <Icon name="cross" size={12} />
        </button>
      </div>
    </div>
  </div>
);

const TreePanel = () => (
  <aside className="flex w-[157px] shrink-0 flex-col overflow-hidden bg-[#4f4f4f]">
    <PanelHeader icon="tree" title="层级树" tabClass="pl-1.5 pr-2" />
    <div className="min-h-0 flex-1 pl-[5px] pt-1.5">
      <div className="h-full overflow-hidden rounded-tl bg-[#2b2b2b] pl-1.5 pt-1.5">
        <div className="ml-0.5 flex h-6 gap-1.5">
          <IconButton name="clip" label="附件" />
          <IconButton name="filter" label="过滤" />
          <Separator />
          <IconButton name="focus" label="定位" state="on" />
          <Separator />
          <IconButton name="findEdit" label="查找替换" />
        </div>
        <label className="my-1.5 flex h-6 items-center gap-1 rounded-l bg-gradient-to-b from-[#4a4a4a] to-[#585858] pl-1.5 text-[#a8a8a8]">
          <Icon name="search" />
          <input aria-label="搜索" className="min-w-0 flex-1 bg-transparent outline-none" />
        </label>
        <Hierarchy />
        <Properties />
      </div>
    </div>
  </aside>
);

const App = () => {
  return (
    <div className="flex h-screen overflow-hidden border-t border-[#5c5c5c] bg-[#2a2a2a] font-['Noto_Sans_CJK_SC','Noto_Sans',sans-serif] text-[15px] leading-5">
      <div className="flex min-w-0 flex-1 flex-col">
        <div className="flex min-h-0 flex-1">
          <Viewport />
          <div className="mr-0.5 grid w-[258px] shrink-0 grid-cols-[minmax(0,1fr)] grid-rows-[166fr_154fr_155fr] border-l border-[#222]">
            <GhostPanel />
            <CurvePanel />
            <AnimationPanel />
          </div>
        </div>
        <Timeline />
      </div>
      <TreePanel />
    </div>
  );
};

export default App;
